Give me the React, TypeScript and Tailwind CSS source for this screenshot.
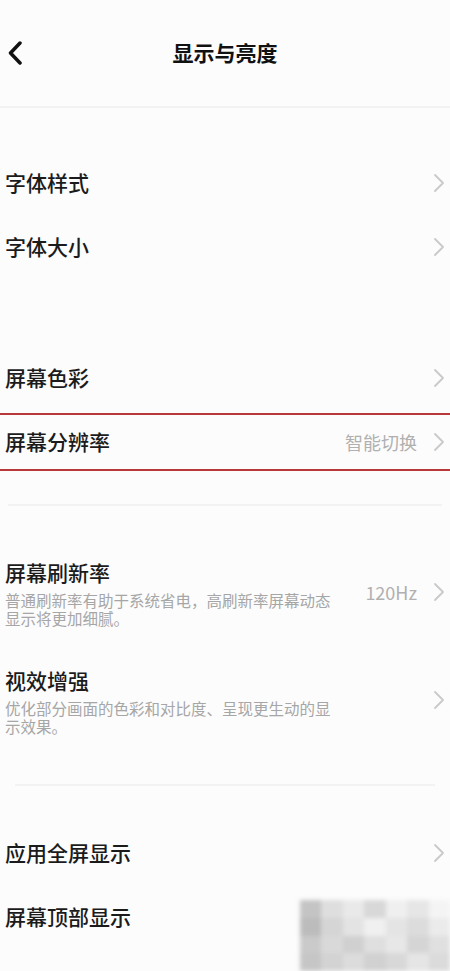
import React from 'react';

const FONT = '"Noto Sans CJK SC", "Noto Sans", sans-serif';

function Chevron() {
  return (
    <svg width="12" height="20" viewBox="0 0 12 20" className="shrink-0">
      <polyline points="2,2 10,10 2,18" fill="none" stroke="#c9c9c9" strokeWidth="1.8" strokeLinecap="round" strokeLinejoin="round" />
    </svg>
  );
}

function Row({ label, value, boxed }: { label: string; value?: string; boxed?: boolean }) {
  return (
    <div
      className={
        boxed
          ? 'flex h-[58px] items-center justify-between border-y-2 border-[#b9383a] pl-[5px] pr-[5px]'
          : 'flex h-[64px] items-center justify-between pl-[5px] pr-[5px]'
      }
    >
      <span className="text-[21px] font-medium text-[#1b1b1b]">{label}</span>
      <div className="flex items-center gap-[16px]">
        {value && <span className="text-[18px] text-[#b0b0b0]">{value}</span>}
        <Chevron />
      </div>
    </div>
  );
}

function DescRow({ label, desc, value }: { label: string; desc: string; value?: string }) {
  return (
    <div className="flex items-center justify-between pl-[5px] pr-[5px]">
      <div className="w-[332px]">
        <div className="text-[21px] leading-[30px] font-medium text-[#1b1b1b]">{label}</div>
        <div className="mt-[4px] text-[15.5px] leading-[18px] text-[#a6a6a6]">{desc}</div>
      </div>
      <div className="flex items-center gap-[16px]">
        {value && <span className="text-[18px] text-[#b0b0b0]">{value}</span>}
        <Chevron />
      </div>
    </div>
  );
}

const MOSAIC = [
  'bg-[#c4c4c4]', 'bg-[#dedede]', 'bg-[#e9e9e9]', 'bg-[#d8d8d8]', 'bg-[#efefef]', 'bg-[#e6e6e6]', 'bg-[#f4f4f4]',
  'bg-[#bcbcbc]', 'bg-[#d5d5d5]', 'bg-[#e3e3e3]', 'bg-[#f0f0f0]', 'bg-[#e4e4e4]', 'bg-[#dcdcdc]', 'bg-[#ebebeb]',
  'bg-[#cacaca]', 'bg-[#d9d9d9]', 'bg-[#d0d0d0]', 'bg-[#dfdfdf]', 'bg-[#e7e7e7]', 'bg-[#d5d5d5]', 'bg-[#e0e0e0]',
  'bg-[#c6c6c6]', 'bg-[#d3d3d3]', 'bg-[#dcdcdc]', 'bg-[#d1d1d1]', 'bg-[#d8d8d8]', 'bg-[#e5e5e5]', 'bg-[#dbdbdb]',
];

export default function App() {
  return (
    <div className="relative h-[971px] w-[450px] overflow-hidden bg-[#fcfcfc]" style={{ fontFamily: FONT }}>
      {/* Header */}
      <div className="flex h-[106px] items-center">
        <div className="flex w-[60px] items-center pl-[8px]">
          <svg width="14" height="24" viewBox="0 0 14 24">
            <polyline points="12,2 2.5,12 12,22" fill="none" stroke="#111" strokeWidth="3.5" strokeLinecap="round" strokeLinejoin="round" />
          </svg>
        </div>
        <div className="flex-1 text-center text-[21px] font-semibold text-[#111]">显示与亮度</div>
        <div className="w-[60px]" />
      </div>
      <div className="h-[2px] bg-[#f2f2f2]" />

      <div className="h-[43px]" />
      <Row label="字体样式" />
      <Row label="字体大小" />

      <div className="h-[67px]" />
      <Row label="屏幕色彩" />
      <div className="h-[3px]" />
      <Row label="屏幕分辨率" value="智能切换" boxed />

      <div className="h-[33px]" />
      <div className="mx-[8px] h-[2px] bg-[#f3f3f3]" />

      <div className="h-[51px]" />
      <DescRow label="屏幕刷新率" desc="普通刷新率有助于系统省电，高刷新率屏幕动态显示将更加细腻。" value="120Hz" />
      <div className="h-[38px]" />
      <DescRow label="视效增强" desc="优化部分画面的色彩和对比度、呈现更生动的显示效果。" />

      <div className="h-[49px]" />
      <div className="mx-[15px] h-[2px] bg-[#f3f3f3]" />

      <div className="h-[35px]" />
      <Row label="应用全屏显示" />
      <div className="flex h-[64px] items-center pl-[5px]">
        <span className="text-[21px] font-medium text-[#1b1b1b]">屏幕顶部显示</span>
      </div>

      {/* watermark mosaic */}
      <div className="absolute left-[300px] top-[900px] grid h-[71px] w-[150px] grid-cols-7 blur-[2px]">
        {MOSAIC.map((c, i) => (
          <div key={i} className={c} />
        ))}
      </div>
    </div>
  );
}
